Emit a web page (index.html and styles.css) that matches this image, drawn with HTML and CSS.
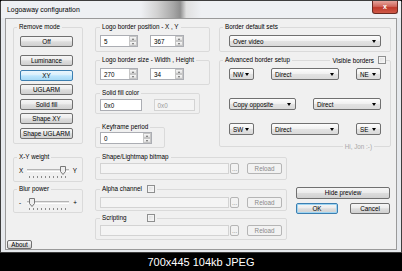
FILE: index.html
```html
<!DOCTYPE html>
<html lang="en">
<head>
    <meta charset="UTF-8">
    <meta name="viewport" content="width=device-width, initial-scale=1.0">
    <title>Logoaway configuration</title>
    <link rel="stylesheet" href="styles.css">
</head>
<body>
    <div class="window">
        <div class="titlebar">
            <span class="title">Logoaway configuration</span>
            <span class="close">x</span>
        </div>
        <div class="client">
            <div class="left">
                <fieldset class="group remove">
                    <legend>Remove mode</legend>
                    <div class="body">
                        <button class="btn">Off</button>
                        <div class="modes">
                            <button class="btn">Luminance</button>
                            <button class="btn active">XY</button>
                            <button class="btn">UGLARM</button>
                            <button class="btn">Solid fill</button>
                            <button class="btn">Shape XY</button>
                            <button class="btn">Shape UGLARM</button>
                        </div>
                    </div>
                </fieldset>
                <fieldset class="group weight">
                    <legend>X-Y weight</legend>
                    <div class="body">
                        <div class="slider">
                            <span class="end">X</span>
                            <div class="track">
                                <svg class="thumb" style="margin-left: 33px" width="6" height="9" viewBox="0 0 6 9"><polygon points="0.5,0.5 5.5,0.5 5.5,5.5 3,8.5 0.5,5.5" fill="#eee" stroke="#777"/></svg>
                            </div>
                            <span class="end max">Y</span>
                        </div>
                        <div class="ticks"></div>
                    </div>
                </fieldset>
                <fieldset class="group blur">
                    <legend>Blur power</legend>
                    <div class="body">
                        <div class="slider">
                            <span class="end">-</span>
                            <div class="track">
                                <svg class="thumb" style="margin-left: 2px" width="6" height="9" viewBox="0 0 6 9"><polygon points="0.5,0.5 5.5,0.5 5.5,5.5 3,8.5 0.5,5.5" fill="#eee" stroke="#777"/></svg>
                            </div>
                            <span class="end max">+</span>
                        </div>
                        <div class="ticks"></div>
                    </div>
                </fieldset>
                <button class="btn about">About</button>
            </div>

            <div class="main">
                <div class="top">
                    <div class="mid">
                        <fieldset class="group pos">
                            <legend>Logo border position - X , Y</legend>
                            <div class="body pair">
                                <div class="field spin w38"><span class="val">5</span><span class="arrows"><i class="up"></i><i class="down"></i></span></div>
                                <div class="field spin w34"><span class="val">367</span><span class="arrows"><i class="up"></i><i class="down"></i></span></div>
                            </div>
                        </fieldset>
                        <fieldset class="group pos">
                            <legend>Logo border size - Width , Height</legend>
                            <div class="body pair">
                                <div class="field spin w38"><span class="val">270</span><span class="arrows"><i class="up"></i><i class="down"></i></span></div>
                                <div class="field spin w34"><span class="val">34</span><span class="arrows"><i class="up"></i><i class="down"></i></span></div>
                            </div>
                        </fieldset>
                        <fieldset class="group solid">
                            <legend>Solid fill color</legend>
                            <div class="body pair">
                                <div class="field w43">0x0</div>
                                <div class="field off w43">0x0</div>
                            </div>
                        </fieldset>
                        <fieldset class="group keyframe">
                            <legend>Keyframe period</legend>
                            <div class="body">
                                <div class="field spin w52"><span class="val">0</span><span class="arrows"><i class="up"></i><i class="down"></i></span></div>
                            </div>
                        </fieldset>
                    </div>

                    <div class="sets">
                        <fieldset class="group defaults">
                            <legend>Border default sets</legend>
                            <div class="body">
                                <div class="combo wide">Over video</div>
                            </div>
                        </fieldset>
                        <fieldset class="group advanced">
                            <legend>Advanced border setup</legend>
                            <label class="visible">Visible borders <span class="check"></span></label>
                            <div class="body">
                                <div class="row r1">
                                    <div class="combo corner">NW</div>
                                    <div class="combo mode">Direct</div>
                                    <div class="combo corner">NE</div>
                                </div>
                                <div class="row r2">
                                    <div class="combo copy">Copy opposite</div>
                                    <div class="combo mode">Direct</div>
                                </div>
                                <div class="row r3">
                                    <div class="combo corner">SW</div>
                                    <div class="combo mode">Direct</div>
                                    <div class="combo corner">SE</div>
                                </div>
                            </div>
                            <span class="hello">Hi, Jon :-)</span>
                        </fieldset>
                    </div>
                </div>

                <div class="bottom">
                    <div class="bitmaps">
                        <fieldset class="group shape">
                            <legend>Shape/Lightmap bitmap</legend>
                            <div class="body file">
                                <div class="field off path"></div>
                                <button class="btn browse" disabled>...</button>
                                <button class="btn reload" disabled>Reload</button>
                            </div>
                        </fieldset>
                        <fieldset class="group alpha">
                            <legend><span class="name">Alpha channel</span><span class="check"></span></legend>
                            <div class="body file">
                                <div class="field off path"></div>
                                <button class="btn browse" disabled>...</button>
                                <button class="btn reload" disabled>Reload</button>
                            </div>
                        </fieldset>
                        <fieldset class="group script">
                            <legend><span class="name">Scripting</span><span class="check"></span></legend>
                            <div class="body file">
                                <div class="field off path"></div>
                                <button class="btn browse" disabled>...</button>
                                <button class="btn reload" disabled>Reload</button>
                            </div>
                        </fieldset>
                    </div>
                    <div class="actions">
                        <button class="btn">Hide preview</button>
                        <div class="confirm">
                            <button class="btn default">OK</button>
                            <button class="btn">Cancel</button>
                        </div>
                    </div>
                </div>
            </div>
        </div>
    </div>
    <div class="caption">700x445 104kb JPEG</div>
</body>
</html>
```

FILE: styles.css
```css
* {
    box-sizing: border-box;
}
body {
    margin: 0;
    width: 402px;
    height: 271px;
    overflow: hidden;
    background: #000;
    font-family: "Liberation Sans", Arial, sans-serif;
    font-size: 6.3px;
    color: #000;
}
.window {
    width: 402px;
    height: 253px;
    display: flex;
    flex-direction: column;
    background: #e6e9ed;
    border: 1px solid #3d3d3d;
    border-radius: 3px 3px 0 0;
}
.titlebar {
    height: 17px;
    display: flex;
    justify-content: space-between;
    align-items: center;
    padding-left: 6px;
    background: linear-gradient(90deg, #eef0f3 0, #eef0f3 35%, #d2d2d2 39%, #a8a8a8 43%, #8f8f8f 44.8%, #e0e0e0 46.3%, #eef0f3 50%, #eef0f3 100%);
}
.title {
    font-size: 6.9px;
}
.close {
    align-self: flex-start;
    width: 26px;
    height: 13px;
    margin-right: 3px;
    background: linear-gradient(#e6a49c, #d0675c 45%, #c0392b 55%, #cf5a48);
    border: 1px solid #6b2a22;
    border-top: none;
    border-radius: 0 0 3px 3px;
    color: #fff;
    font-weight: bold;
    font-size: 7px;
    line-height: 12px;
    text-align: center;
}
.client {
    flex: 1;
    display: flex;
    margin: 0 4px 2px 4px;
    border: 1px solid #9a9a9a;
    background: #f0f0f0;
}

/* group boxes */
.group {
    margin: 0;
    padding: 0;
    min-width: 0;
    border: 1px solid #dadada;
    border-radius: 2px;
    position: relative;
}
.group legend {
    margin-left: 4px;
    padding: 0 2px;
    height: 8px;
    line-height: 8px;
    display: flex;
    align-items: center;
}

/* buttons */
.btn {
    display: block;
    margin: 0;
    padding: 0;
    height: 11px;
    font: inherit;
    line-height: 9px;
    color: #000;
    text-align: center;
    border: 1px solid #707070;
    border-radius: 2px;
    background: linear-gradient(#f6f6f6, #ececec 45%, #dddddd 52%, #d0d0d0);
}
.btn.active {
    border-color: #3c7fb1;
    background: linear-gradient(#eaf6fd, #d9f0fc 45%, #bee6fd 52%, #a7d9f5);
}
.btn.default {
    border-color: #3c7fb1;
    box-shadow: inset 0 0 0 1px #9fd5f2;
}
.btn:disabled {
    color: #8a8a8a;
    border-color: #b5b5b5;
    background: #f2f2f2;
}

/* left column */
.left {
    width: 84px;
    display: flex;
    flex-direction: column;
}
.left .group {
    width: 70px;
    margin-left: 7px;
}
.left .group legend {
    margin-left: 3px;
}
.remove {
    margin-top: 4px;
}
.remove .body {
    padding: 5px 0 4.5px 6px;
}
.remove .btn {
    width: 53px;
}
.modes {
    margin-top: 8px;
    display: flex;
    flex-direction: column;
    gap: 3.5px;
}
.weight {
    margin-top: 9px;
}
.weight .body {
    padding: 4px 5px 3px 5px;
}
.blur {
    margin-top: 3px;
}
.blur .body {
    padding: 4px 5px 2px 5px;
}
.slider {
    width: 58px;
    height: 10px;
    display: grid;
    grid-template-columns: 8px 42px 8px;
    align-items: center;
}
.end.max {
    text-align: right;
}
.track {
    width: 42px;
    height: 9px;
    display: flex;
    align-items: flex-start;
    background: linear-gradient(transparent 3px, #b4b4b4 3px, #b4b4b4 4px, #e4e4e4 4px, #e4e4e4 5px, #ffffff 5px, #ffffff 6px, transparent 6px);
}
.thumb {
    flex: none;
    display: block;
}
.ticks {
    width: 38px;
    height: 2px;
    margin: 1px 0 0 10px;
    background: repeating-linear-gradient(90deg, #8a8a8a 0 1px, transparent 1px 4px);
}
.about {
    margin: auto 0 0 1px;
    width: 25px;
    height: 9px;
    line-height: 7px;
}

/* main area */
.main {
    flex: 1;
    padding-left: 5px;
    display: flex;
    flex-direction: column;
}
.top {
    display: flex;
    margin-top: 4px;
}
.mid {
    width: 118px;
    display: flex;
    flex-direction: column;
    align-items: flex-start;
}
.pos {
    width: 115px;
}
.pos + .pos {
    margin-top: 4px;
}
.pos .body {
    padding: 4px 4px 4px 4px;
}
.pair {
    display: flex;
    gap: 12px;
}
.solid {
    width: 105px;
    margin-top: 4px;
}
.solid .body {
    padding: 2px 4px 2px 4px;
}
.keyframe {
    width: 70px;
    margin-top: 9px;
}
.keyframe .body {
    padding: 1px 4px 3px 4px;
}

/* text fields */
.field {
    height: 12px;
    display: flex;
    align-items: center;
    padding-left: 3px;
    border: 1px solid #abadb3;
    background: #fff;
}
.field.off {
    color: #9a9a9a;
    border-color: #d3d3d3;
    background: #f4f4f4;
}
.w38 { width: 38px; }
.w34 { width: 34px; }
.w43 { width: 43px; }
.w52 { width: 52px; }
.spin .val {
    flex: 1;
}
.arrows {
    width: 8px;
    height: 100%;
    display: flex;
    flex-direction: column;
}
.arrows i {
    flex: 1;
    display: flex;
    align-items: center;
    justify-content: center;
    border: 1px solid #c6c6c6;
    background: linear-gradient(#f7f7f7, #e0e0e0);
}
.arrows .up::after {
    content: "";
    border-left: 1.5px solid transparent;
    border-right: 1.5px solid transparent;
    border-bottom: 2px solid #666;
}
.arrows .down::after {
    content: "";
    border-left: 1.5px solid transparent;
    border-right: 1.5px solid transparent;
    border-top: 2px solid #666;
}

/* right column */
.sets {
    width: 172px;
    margin-left: 6px;
}
.sets .group legend {
    margin-left: 3px;
}
.defaults .body {
    padding: 4px 9px 4px 9px;
}
.combo {
    height: 12px;
    display: flex;
    align-items: center;
    justify-content: space-between;
    padding: 0 4px 0 3px;
    border: 1px solid #707070;
    border-radius: 2px;
    background: linear-gradient(#fdfdfd, #f0f0f0 50%, #e2e2e2 55%, #dadada);
}
.combo::after {
    content: "";
    border-left: 2.5px solid transparent;
    border-right: 2.5px solid transparent;
    border-top: 3px solid #000;
}
.combo.wide {
    width: 152px;
}
.advanced {
    margin-top: 4px;
}
.advanced .body {
    padding: 4px 9px 11px 9px;
}
.row {
    display: flex;
    justify-content: space-between;
}
.r2 {
    margin-top: 18px;
}
.r3 {
    margin-top: 13px;
}
.combo.corner {
    width: 25px;
}
.combo.mode {
    width: 68px;
}
.combo.copy {
    width: 67px;
}
.visible {
    position: absolute;
    right: 4px;
    top: -8px;
    display: flex;
    align-items: center;
    gap: 4px;
    padding-left: 2px;
    background: #f0f0f0;
}
.check {
    width: 8px;
    height: 8px;
    border: 1px solid #8e8f8f;
    background: linear-gradient(135deg, #dcdcdc, #f8f8f8);
    box-shadow: inset 0 0 0 1px #f4f4f4;
}
.hello {
    position: absolute;
    right: 16px;
    bottom: -5px;
    padding: 0 2px;
    color: #a8a8a8;
    background: #f0f0f0;
    line-height: 8px;
}

/* bottom area */
.bottom {
    display: flex;
    margin-top: 5px;
}
.bitmaps {
    width: 192px;
    display: flex;
    flex-direction: column;
}
.name {
    width: 45px;
}
.file {
    display: flex;
    padding: 0 4px;
}
.file .path {
    width: 130px;
    height: 11px;
}
.file .browse {
    width: 9px;
    margin-left: 1px;
}
.file .reload {
    width: 35px;
    margin-left: 8px;
}
.shape .body {
    padding-top: 2px;
    padding-bottom: 5px;
}
.alpha {
    margin-top: 5px;
}
.alpha .body {
    padding-top: 4px;
    padding-bottom: 2px;
}
.script {
    margin-top: 3px;
}
.script .body {
    padding-top: 3px;
    padding-bottom: 3px;
}
.actions {
    width: 94px;
    margin-left: 9px;
    padding-top: 34px;
}
.actions > .btn {
    width: 94px;
    height: 12px;
    line-height: 10px;
}
.confirm {
    display: flex;
    justify-content: space-between;
    margin-top: 4px;
}
.confirm .btn:first-child {
    width: 42px;
}
.confirm .btn:last-child {
    width: 40px;
}

.caption {
    height: 18px;
    padding-top: 1px;
    color: #fff;
    font-size: 11px;
    line-height: 17px;
    text-align: center;
}
```
